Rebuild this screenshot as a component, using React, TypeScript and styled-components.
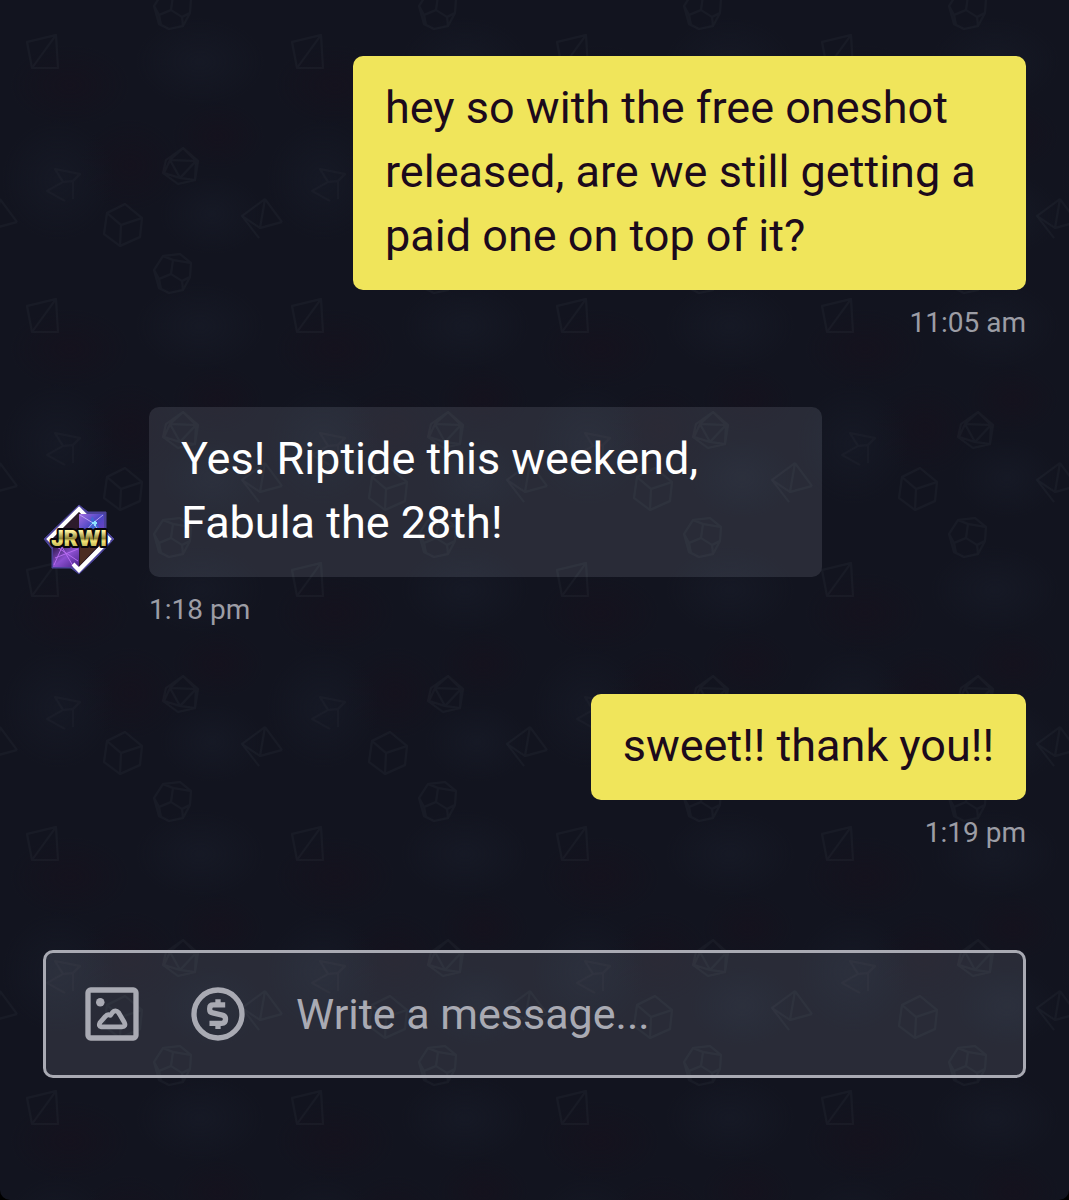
import React, { useState } from "react";
import styled, { createGlobalStyle } from "styled-components";

/* One repeat of the dice wallpaper; shapes that cross an edge are drawn twice. */
const d12 = `<path d="M154 270L163 256L180 254L191 263L190 277L183 290L169 293L159 288ZM163 256L173 260L191 263M173 260L171 274L159 279L154 270M171 274L182 281L190 277M182 281L183 290M159 279L161 289"/>`;
const d10 = `<path d="M265 199L242 216L259 238M265 199L282 222M265 199L260 228M242 216L260 228L282 222"/>`;
const tile = `<svg xmlns="http://www.w3.org/2000/svg" width="265" height="264" viewBox="0 0 265 264">
<defs>
<radialGradient id="w"><stop offset="0" stop-color="#17101c" stop-opacity=".5"/><stop offset="1" stop-color="#17101c" stop-opacity="0"/></radialGradient>
<radialGradient id="c"><stop offset="0" stop-color="#181c29" stop-opacity=".6"/><stop offset="1" stop-color="#181c29" stop-opacity="0"/></radialGradient>
</defs>
<ellipse cx="70" cy="85" rx="60" ry="40" fill="url(#w)"/>
<ellipse cx="218" cy="136" rx="46" ry="34" fill="url(#w)"/>
<ellipse cx="130" cy="165" rx="50" ry="46" fill="url(#w)"/>
<ellipse cx="200" cy="62" rx="64" ry="44" fill="url(#c)"/>
<ellipse cx="58" cy="180" rx="56" ry="60" fill="url(#c)"/>
<ellipse cx="212" cy="214" rx="52" ry="40" fill="url(#c)"/>
<g fill="none" stroke="#e6ecff" stroke-width="2" stroke-linejoin="round">
<g stroke-opacity=".032">
<path d="M27 42L56 35L58 68L32 68ZM56 35L32 68"/>
<path d="M183 148L198 161L195 180L178 184L163 173L166 160ZM170 160L196 161L180 178ZM183 148L170 160L164 173L180 178L195 180L196 161Z"/>
<path d="M107 213L125 204L142 218L140 237L120 246L104 234ZM107 213L121 225L142 218M121 225L120 246"/>
${d10}<g transform="translate(-265)">${d10}</g>
${d12}<g transform="translate(0 -264)">${d12}</g>
</g>
<path stroke-opacity=".02" d="M55 169L80 174L73 181L63 182ZM73 181L73 199M63 182L47 191L65 201"/>
</g></svg>`;
const wallpaper = `url("data:image/svg+xml,${encodeURIComponent(tile)}")`;

const GlobalStyle = createGlobalStyle`
  *, *::before, *::after { box-sizing: border-box; }
  body { margin: 0; background: #000; font-family: Roboto, "Noto Sans", sans-serif; }
`;

const Page = styled.main`
  display: flex;
  flex-direction: column;
  min-height: 100vh;
  padding: 56px 43px 48px;
  border-radius: 0 0 10px 10px;
  background: #12141f ${wallpaper};
`;

const Messages = styled.ol`
  display: flex;
  flex-direction: column;
  gap: 63px;
  margin: 0;
  padding: 0 0 96px;
  list-style: none;
`;

const Message = styled.li<{ $own?: boolean }>`
  display: grid;
  grid-template-columns: ${(p) => (p.$own ? "1fr" : "72px 1fr")};
  column-gap: 34px;
  row-gap: 11px;
  align-items: end;
  justify-items: ${(p) => (p.$own ? "end" : "start")};
`;

const Bubble = styled.p<{ $own?: boolean }>`
  margin: 0;
  max-width: 673px;
  padding: 20px 32px 22px;
  border-radius: 10px;
  font-size: 45px;
  line-height: 64px;
  color: ${(p) => (p.$own ? "#1c0a1c" : "#fff")};
  background: ${(p) => (p.$own ? "#f0e55b" : "rgba(232, 240, 255, 0.11)")};
`;

const Time = styled.time`
  grid-column: -2;
  font-size: 28px;
  line-height: 43px;
  color: #9c9da5;
`;

const AvatarArt = styled.svg`
  display: block;
  width: 72px;
  height: 74px;
`;

const Composer = styled.form`
  display: flex;
  align-items: center;
  gap: 42px;
  height: 128px;
  padding: 0 34px;
  border: 3px solid #a9aab3;
  border-radius: 10px;
  background: rgba(232, 240, 255, 0.11);
`;

const IconButton = styled.button`
  flex: none;
  display: flex;
  padding: 0;
  border: 0;
  background: none;
  color: #a9aab3;
  cursor: pointer;
`;

const Icon = styled.svg`
  width: 64px;
  height: 64px;
  fill: none;
  stroke: currentColor;
  stroke-width: 2;
  stroke-linejoin: round;
`;

const MessageInput = styled.input`
  flex: 1;
  min-width: 0;
  height: 64px;
  padding: 0 4px;
  border: 0;
  outline: 0;
  background: none;
  font: inherit;
  font-size: 43px;
  color: #fff;

  &::placeholder {
    color: #a9aab3;
    opacity: 1;
  }
`;

function Avatar() {
  return (
    <AvatarArt viewBox="0 0 72 74" role="img" aria-label="JRWI">
      <defs>
        <linearGradient id="gold" x1="0" y1="0" x2="0" y2="1">
          <stop offset="0.2" stopColor="#fff3a0" />
          <stop offset="0.5" stopColor="#8f8438" />
          <stop offset="0.6" stopColor="#f3e577" />
          <stop offset="0.9" stopColor="#b5a648" />
        </linearGradient>
        <linearGradient id="gem" x1="0" y1="0" x2="1" y2="1">
          <stop offset="0" stopColor="#a36be0" />
          <stop offset="0.5" stopColor="#4a46c4" />
          <stop offset="1" stopColor="#7d3fc0" />
        </linearGradient>
        <linearGradient id="facet" x1="0" y1="0" x2="1" y2="1">
          <stop offset="0" stopColor="#2b1745" />
          <stop offset="0.5" stopColor="#8b4fd0" />
          <stop offset="1" stopColor="#4a2388" />
        </linearGradient>
      </defs>
      <path d="M36 2L45 9H63V28L71 36L54 54L36 71L28 65H9V46L1 36Z" fill="#4c4399" stroke="#4c4399" strokeWidth="1" strokeLinejoin="round" />
      <path d="M36 6L66 36L36 67L6 36Z" fill="#2d1b2c" stroke="#fff" strokeWidth="4" />
      <path d="M37 37H60L37 62Z" fill="#4b2c22" />
      <path d="M36 11H61V34H36Z" fill="url(#gem)" />
      <path d="M49 13L60 31H44Z" fill="#3f67d2" />
      <path d="M37 12L50 20L60 12M50 20L60 33M50 20L39 32" stroke="#b9a2f2" strokeWidth="1" fill="none" />
      <path d="M49 20h5m-2-2v5" stroke="#8fe4ff" strokeWidth="2" />
      <path d="M10 43H36V64H10Z" fill="url(#facet)" />
      <path d="M11 62L19 44L30 63M14 44L35 58M12 55L35 46" stroke="#b56bf0" strokeWidth="1" fill="none" />
      <path d="M30 61L36 67L66 37" stroke="#fff" strokeWidth="4" fill="none" />
      <text
        x="36"
        y="43"
        textAnchor="middle"
        fontFamily="Inter, sans-serif"
        fontWeight="900"
        fontSize="21"
        fill="url(#gold)"
        stroke="#08060c"
        strokeWidth="4"
        strokeLinejoin="round"
        paintOrder="stroke"
      >
        JRWI
      </text>
    </AvatarArt>
  );
}

function ImageIcon() {
  return (
    <Icon viewBox="0 0 24 24" aria-hidden="true">
      <rect x="3" y="3" width="18" height="18" rx="1" />
      <circle cx="7.6" cy="7.6" r="1.6" fill="currentColor" stroke="none" />
      <path d="M8 16.8H15.7Q17.4 16.7 16.6 15.1L14.5 11.5Q13.3 10.2 12.2 11.4L11.4 12.5Q10.3 11.9 9.5 12.9L7.5 15.2Q6.8 16.6 8 16.8Z" strokeWidth="1.8" />
    </Icon>
  );
}

function TipIcon() {
  return (
    <Icon viewBox="0 0 24 24" aria-hidden="true">
      <circle cx="12" cy="12" r="9" />
      <path d="M14.7 8.6H10.3Q8.9 8.6 8.9 9.8V10.4Q8.9 11.4 10 11.6L13.6 12.4Q14.8 12.7 14.8 13.8V14.1Q14.8 15.5 13.4 15.5H8.8M12 6.5V8.6M12 15.5V17.6" />
    </Icon>
  );
}

const thread = [
  {
    own: true,
    text: "hey so with the free oneshot released, are we still getting a paid one on top of it?",
    time: "11:05 am",
    stamp: "11:05",
  },
  { own: false, text: "Yes! Riptide this weekend, Fabula the 28th!", time: "1:18 pm", stamp: "13:18" },
  { own: true, text: "sweet!! thank you!!", time: "1:19 pm", stamp: "13:19" },
];

export default function App() {
  const [draft, setDraft] = useState("");

  return (
    <>
      <GlobalStyle />
      <Page>
        <Messages>
          {thread.map((m) => (
            <Message key={m.stamp} $own={m.own}>
              {!m.own && <Avatar />}
              <Bubble $own={m.own}>{m.text}</Bubble>
              <Time dateTime={m.stamp}>{m.time}</Time>
            </Message>
          ))}
        </Messages>
        <Composer onSubmit={(e) => e.preventDefault()}>
          <IconButton type="button" aria-label="Add image">
            <ImageIcon />
          </IconButton>
          <IconButton type="button" aria-label="Send a tip">
            <TipIcon />
          </IconButton>
          <MessageInput
            type="text"
            aria-label="Message"
            placeholder="Write a message..."
            value={draft}
            onChange={(e) => setDraft(e.target.value)}
          />
        </Composer>
      </Page>
    </>
  );
}
